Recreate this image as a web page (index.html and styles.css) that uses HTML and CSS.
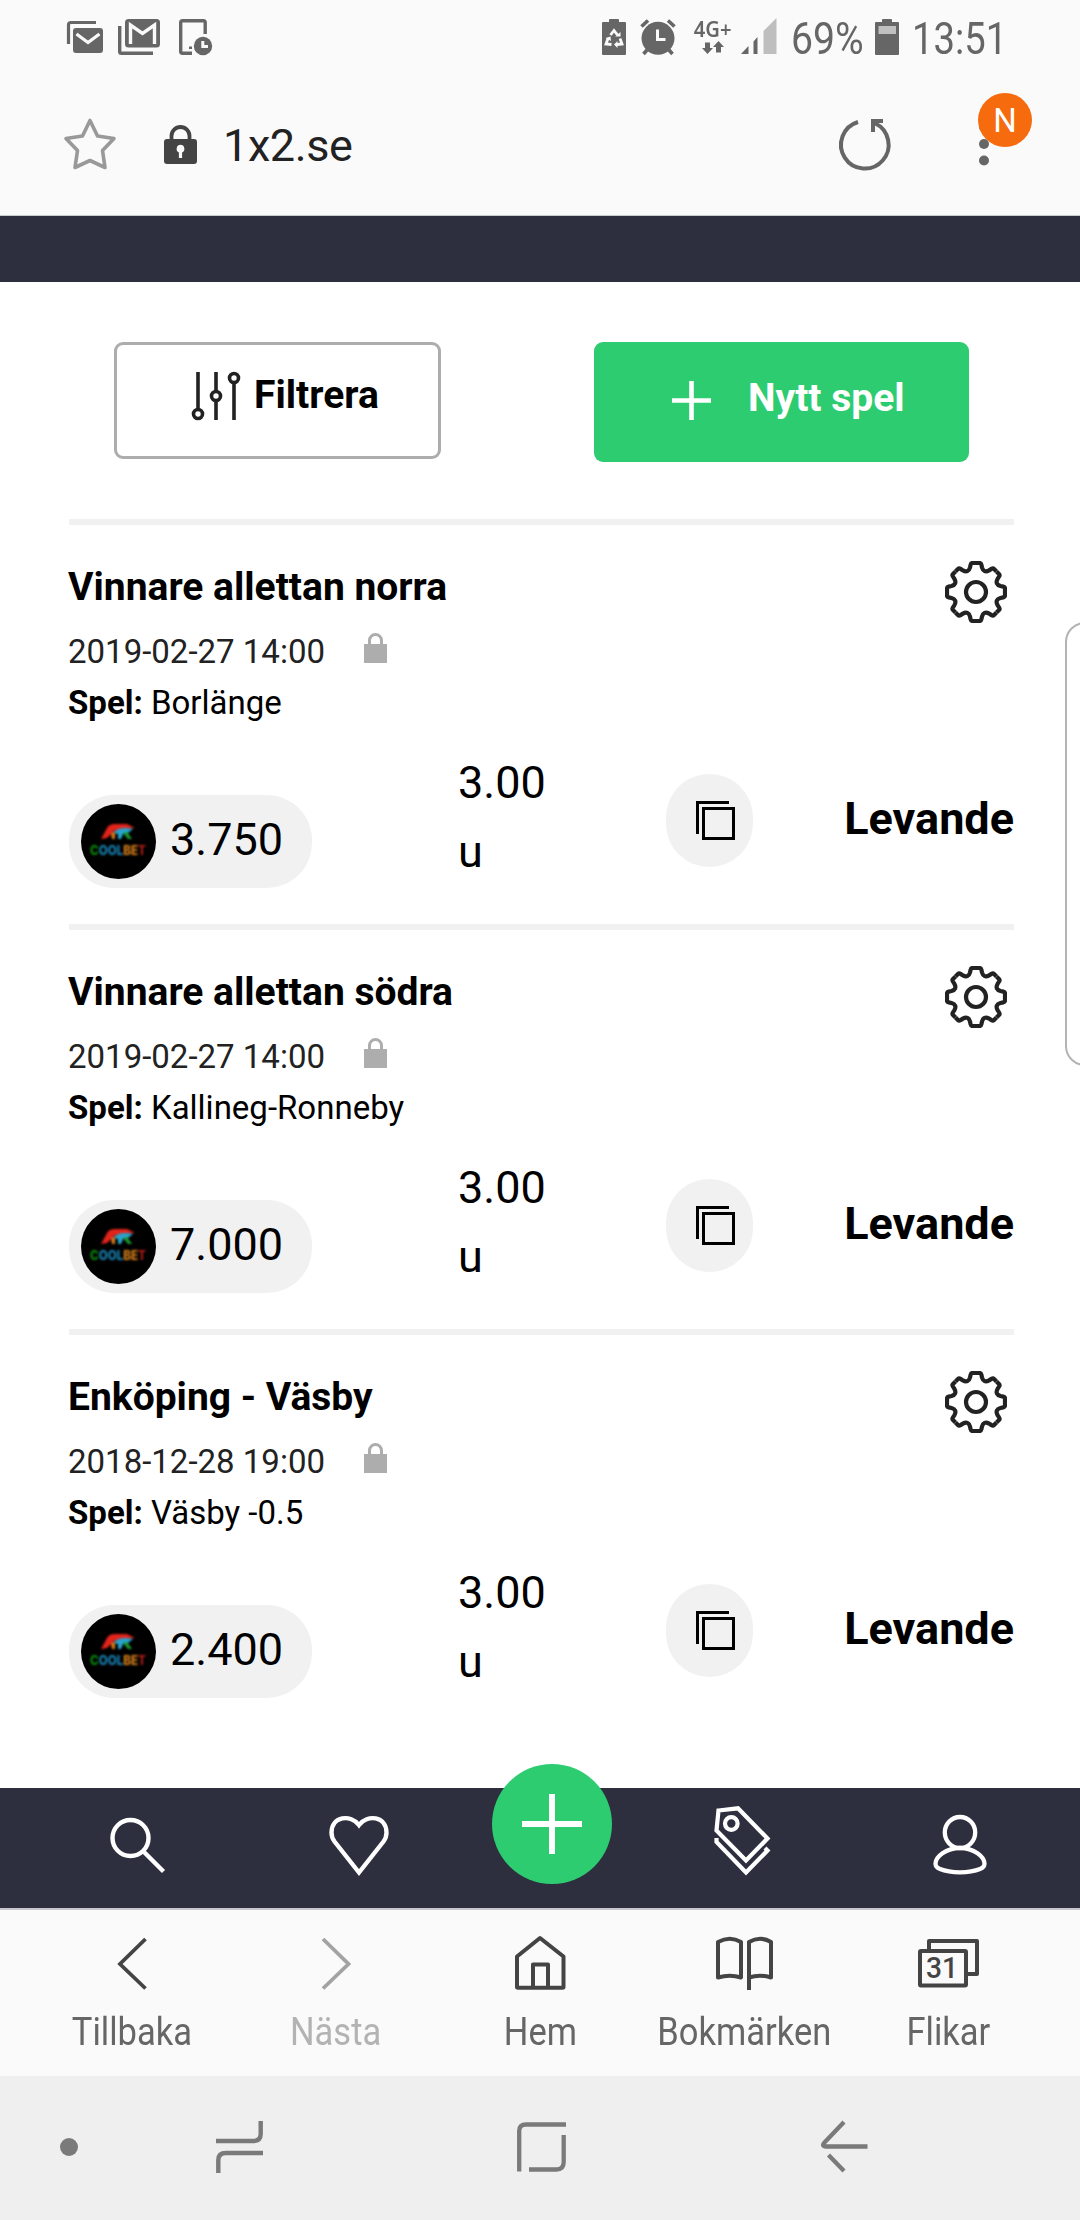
FILE: index.html
```html
<!DOCTYPE html>
<html lang="sv">
<head>
<meta charset="utf-8">
<title>1x2.se</title>
<link rel="stylesheet" href="styles.css">
</head>
<body>
<svg class="defs" width="0" height="0" aria-hidden="true">
  <defs>
    <path id="cog" d="M0-29H3.5Q5-29 5.4-27.3L6-24.5Q6.8-21.6 8.65-20.85Q10.5-20.1 13.1-21.6L15.5-23.1Q17-24.05 18.05-23L20.5-20.5"/>
    <symbol id="gear" viewBox="-31 -31 62 62">
      <g fill="none" stroke="#222" stroke-width="4.2">
        <use href="#cog"/><use href="#cog" transform="rotate(45)"/><use href="#cog" transform="rotate(90)"/><use href="#cog" transform="rotate(135)"/>
        <use href="#cog" transform="rotate(180)"/><use href="#cog" transform="rotate(225)"/><use href="#cog" transform="rotate(270)"/><use href="#cog" transform="rotate(315)"/>
        <circle r="10"/>
      </g>
    </symbol>
    <symbol id="padlock" viewBox="0 0 23 30">
      <path d="M0 11H4V7.5a7.5 7.5 0 0 1 15 0V11H23V30H0zM7 11H16V7.5a4.5 4.5 0 0 0-9 0z" fill="#adadad"/>
    </symbol>
    <symbol id="copy" viewBox="0 0 39 39">
      <path d="M33 1.5H1.5V33M7.500 7.500H37.500V37.500H7.500Z" fill="none" stroke="#000" stroke-width="3"/>
    </symbol>
    <symbol id="coolbet" viewBox="0 0 75 75">
      <circle cx="37.500" cy="37.500" r="37.500" fill="#000"/>
      <g class="logo-art">
        <path d="M20 35L26 24Q28 20 34 20L46 20 54 24 40 25 33 27 26 34Z" fill="#e3241b"/>
        <path d="M32 29Q38 22 52 25L47 29 42 30 40 35H37V30Z" fill="#27a3cf"/>
        <path d="M30 29L34 28V35H31Z" fill="#d97b1a"/>
        <path d="M42 29L46 28 51 35H47Z" fill="#1c9b2c"/>
        <text x="9" y="51" textLength="56" lengthAdjust="spacingAndGlyphs" class="logo-word"><tspan fill="#0c900c">C</tspan><tspan fill="#1a86b8">OOL</tspan><tspan fill="#d8801a">BE</tspan><tspan fill="#b01c18">T</tspan></text>
      </g>
    </symbol>
  </defs>
</svg>

<div class="screen">
  <header class="status">
    <svg class="st-mail" width="36" height="32" viewBox="0 0 36 32"><path d="M1.500 23V4Q1.500 1.500 4 1.500H29" fill="none" stroke="#666" stroke-width="3.200"/><rect x="6" y="7" width="30" height="25" rx="3" fill="#666"/><path d="M9.500 13L21 21.500 32.500 13" fill="none" stroke="#fafafa" stroke-width="3.200"/></svg>
    <svg class="st-gmail" width="42" height="36" viewBox="0 0 42 36"><path d="M1.700 7V32.500Q1.700 34.300 3.500 34.300H35" fill="none" stroke="#666" stroke-width="3.400"/><rect x="7" y="0" width="35" height="28.500" rx="3.500" fill="#666"/><path d="M12.500 25V6L24.500 14.500 36.500 6V25" fill="none" stroke="#fafafa" stroke-width="3.400"/></svg>
    <svg class="st-phone" width="34" height="36" viewBox="0 0 34 36"><path d="M26.200 15V3.500Q26.200 1.700 24.500 1.700H3.500Q1.700 1.700 1.700 3.500V32.500Q1.700 34.200 3.500 34.200H13" fill="none" stroke="#666" stroke-width="3.400"/><rect x="10" y="27.500" width="3" height="2.500" fill="#666"/><circle cx="24" cy="27" r="9.200" fill="#666"/><path d="M23.800 22V27.500H29" fill="none" stroke="#fafafa" stroke-width="3"/></svg>
    <div class="spacer"></div>
    <svg class="st-saver" width="24" height="36" viewBox="0 0 24 36"><path d="M1 3H7V1Q7 0 8 0H16Q17 0 17 1V3H23Q24 3 24 4V35Q24 36 23 36H1Q0 36 0 35V4Q0 3 1 3Z" fill="#666"/><path d="M8.500 16L12 11.500 15.500 16M18 19.500L20 25 14.500 25.500M9.500 25.500L4 25 6 19.500" fill="none" stroke="#fafafa" stroke-width="2.800"/><path d="M13.200 17.500H18.500V13zM15.500 22V29L12 25.500zM3.500 19L8.500 17.500 9 22z" fill="#fafafa"/></svg>
    <svg class="st-alarm" width="36" height="36" viewBox="0 0 36 36"><circle cx="18" cy="19.300" r="16.500" fill="#666"/><path d="M1.500 7.500L8 1.500M34.500 7.500L28 1.500M7 31L3.500 35M29 31L32.500 35" stroke="#666" stroke-width="3.600"/><path d="M17.500 10.500V20.500H25.500" fill="none" stroke="#fafafa" stroke-width="3"/></svg>
    <div class="net"><span>4G+</span><svg width="22" height="13" viewBox="0 0 22 13"><path d="M3 1.500H8V7H11L5.500 13 0 7H3zM14 11.500H19V6H22L16.500 0 11 6H14z" fill="#666"/></svg></div>
    <svg class="st-signal" width="36" height="36" viewBox="0 0 36 36"><path d="M0 36L7.500 28V36zM12.500 23.500L16.500 19V36H12.500z" fill="#666"/><path d="M22.500 13L35.500 0V36H22.500z" fill="#bebebe"/></svg>
    <span class="st-text st-pct">69%</span>
    <svg class="st-batt" width="24" height="36" viewBox="0 0 24 36"><path d="M1 3H7V1Q7 0 8 0H16Q17 0 17 1V3H23Q24 3 24 4V35Q24 36 23 36H1Q0 36 0 35V4Q0 3 1 3Z" fill="#666"/><rect x="3.500" y="7" width="17.500" height="8" fill="#c0c0c0"/></svg>
    <span class="st-text st-clock">13:51</span>
  </header>

  <div class="urlbar">
    <svg class="u-star" width="52" height="52" viewBox="0 0 52 52"><path d="M26 2.500L33.500 18 50 20.500 38.500 32.500 41 49.500 26 42.500 11 49.500 13.500 32.500 2 20.500 18.500 18Z" fill="none" stroke="#999" stroke-width="3.600" stroke-linejoin="round"/></svg>
    <svg class="u-lock" width="33" height="39" viewBox="0 0 33 39"><path d="M7.500 16V11a9 9 0 0 1 18 0V16" fill="none" stroke="#444" stroke-width="3.800"/><rect y="14" width="33" height="25" rx="3" fill="#444"/><path d="M16.500 19.800a4 4 0 0 1 1.600 7.600V33H14.900V27.400a4 4 0 0 1 1.600-7.600z" fill="#fafafa"/></svg>
    <span class="u-host">1x2.se</span>
    <div class="spacer"></div>
    <svg class="u-reload" width="52" height="52" viewBox="0 0 52 52"><path d="M20 3A23.800 23.800 0 1 0 37 4.300" fill="none" stroke="#666" stroke-width="4"/><path d="M33 13V0H45V4H39L37 7V13z" fill="#666"/></svg>
    <div class="u-menu">
      <svg width="10" height="44" viewBox="0 0 10 44"><circle cx="5" cy="5" r="5" fill="#666"/><circle cx="5" cy="22" r="5" fill="#666"/><circle cx="5" cy="38.500" r="5" fill="#666"/></svg>
      <span class="u-badge">N</span>
    </div>
  </div>

  <main class="page">
    <div class="band"></div>
    <div class="actions">
      <button class="btn filter"><svg width="48" height="48" viewBox="0 0 48 48"><g fill="none" stroke="#222" stroke-width="3.600"><path d="M6 0V37M24 0V19M24 29V48M42 11V48"/><circle cx="6" cy="42" r="4.500"/><circle cx="24" cy="24" r="4.500"/><circle cx="42" cy="6" r="4.500"/></g></svg><span>Filtrera</span></button>
      <button class="btn new"><svg width="39" height="39" viewBox="0 0 39 39"><path d="M19.500 0V39M0 19.500H39" stroke="#fff" stroke-width="4.600"/></svg><span>Nytt spel</span></button>
    </div>

    <section class="bets">
      <article class="bet">
        <div class="bet-head">
          <div class="bet-info">
            <h2>Vinnare allettan norra</h2>
            <p class="when">2019-02-27 14:00<svg width="23" height="30"><use href="#padlock"/></svg></p>
            <p><b>Spel:</b> Borlänge</p>
          </div>
          <svg class="gear" width="62" height="62"><use href="#gear"/></svg>
        </div>
        <div class="bet-row">
          <div class="odds"><svg width="75" height="75"><use href="#coolbet"/></svg><span>3.750</span></div>
          <div class="stake">3.00<br>u</div>
          <div class="copy"><svg width="39" height="39"><use href="#copy"/></svg></div>
          <div class="live">Levande</div>
        </div>
      </article>
      <article class="bet">
        <div class="bet-head">
          <div class="bet-info">
            <h2>Vinnare allettan södra</h2>
            <p class="when">2019-02-27 14:00<svg width="23" height="30"><use href="#padlock"/></svg></p>
            <p><b>Spel:</b> Kallineg-Ronneby</p>
          </div>
          <svg class="gear" width="62" height="62"><use href="#gear"/></svg>
        </div>
        <div class="bet-row">
          <div class="odds"><svg width="75" height="75"><use href="#coolbet"/></svg><span>7.000</span></div>
          <div class="stake">3.00<br>u</div>
          <div class="copy"><svg width="39" height="39"><use href="#copy"/></svg></div>
          <div class="live">Levande</div>
        </div>
      </article>
      <article class="bet">
        <div class="bet-head">
          <div class="bet-info">
            <h2>Enköping - Väsby</h2>
            <p class="when">2018-12-28 19:00<svg width="23" height="30"><use href="#padlock"/></svg></p>
            <p><b>Spel:</b> Väsby -0.5</p>
          </div>
          <svg class="gear" width="62" height="62"><use href="#gear"/></svg>
        </div>
        <div class="bet-row">
          <div class="odds"><svg width="75" height="75"><use href="#coolbet"/></svg><span>2.400</span></div>
          <div class="stake">3.00<br>u</div>
          <div class="copy"><svg width="39" height="39"><use href="#copy"/></svg></div>
          <div class="live">Levande</div>
        </div>
      </article>
    </section>
  </main>

  <nav class="appnav">
    <svg class="n-search" width="56" height="56" viewBox="0 0 56 56"><g fill="none" stroke="#fff" stroke-width="4.400"><circle cx="20.500" cy="20" r="18"/><path d="M33.500 33.500L53.500 53.500"/></g></svg>
    <svg class="n-heart" width="60" height="61" viewBox="0 0 60 61"><path d="M30 10C22-1 2.500 1 2.500 17.500 2.500 21.500 4 24.500 5.500 26.500L30 57.500 54.500 26.500C56 24.500 57.500 21.500 57.500 17.500 57.500 1 38-1 30 10Z" fill="none" stroke="#fff" stroke-width="4.400"/></svg>
    <button class="fab"><svg width="60" height="60" viewBox="0 0 60 60"><path d="M30 0V60M0 30H60" stroke="#fff" stroke-width="6"/></svg></button>
    <svg class="n-tags" width="58" height="70" viewBox="0 0 58 70"><g fill="none" stroke="#fff" stroke-width="4.200"><path d="M4.500 4.500L24 2.300 53.500 32.500 32 54.500 2.500 24.500Z"/><circle cx="17.300" cy="17.500" r="6.300"/><path d="M2.500 32V36L32 66.500 53.500 44.500 51 42"/></g></svg>
    <svg class="n-user" width="54" height="60" viewBox="0 0 54 60"><g fill="none" stroke="#fff" stroke-width="4.300"><ellipse cx="27" cy="17.500" rx="15.200" ry="15.500"/><path d="M27 33C41 33 51.500 42 51.500 48.500 51.500 51 50 53 47 54 41 56.500 34 57.300 27 57.300S13 56.500 7 54C4 53 2.500 51 2.500 48.500 2.500 42 13 33 27 33Z"/></g></svg>
  </nav>

  <nav class="toolbar">
    <div class="tool"><svg width="60" height="54" viewBox="0 0 60 54"><path d="M43.500 3L18 28 43.500 52.500" fill="none" stroke="#444" stroke-width="3.800"/></svg><span>Tillbaka</span></div>
    <div class="tool off"><svg width="60" height="54" viewBox="0 0 60 54"><path d="M17 3L42.500 28 17 52.500" fill="none" stroke="#a3a3a3" stroke-width="3.800"/></svg><span>Nästa</span></div>
    <div class="tool"><svg width="60" height="54" viewBox="0 0 60 54"><path d="M7 20.500L30 2 53.500 20.500V51Q53.500 51.800 52.500 51.800H8Q7 51.800 7 51ZM23 51V28.500H38V51" fill="none" stroke="#444" stroke-width="4" stroke-linejoin="round"/></svg><span>Hem</span></div>
    <div class="tool"><svg width="60" height="54" viewBox="0 0 60 54"><path d="M27 6Q16-.5 4 6V41.500Q16 38 27 41.500ZM35 54V6Q46-.5 57 6V41.500Q46 38 35 41.500" fill="none" stroke="#444" stroke-width="4" stroke-linejoin="round"/></svg><span>Bokmärken</span></div>
    <div class="tool"><svg width="62" height="54" viewBox="0 0 62 54"><path d="M12 15V5H60V38H50" fill="none" stroke="#444" stroke-width="4" stroke-linejoin="round"/><rect x="3" y="15" width="46" height="34.500" rx="1" fill="none" stroke="#444" stroke-width="4"/><text x="9" y="42" textLength="32" lengthAdjust="spacingAndGlyphs" class="tab-count">31</text></svg><span>Flikar</span></div>
  </nav>

  <footer class="sysnav">
    <svg class="s-dot" width="18" height="18" viewBox="0 0 18 18"><circle cx="9" cy="9" r="9" fill="#7a7a7a"/></svg>
    <svg class="s-recent" width="47" height="54" viewBox="0 0 47 54"><path d="M0 21H37Q44.700 21 44.700 14V1M47 33H10Q2.300 33 2.300 40V53" fill="none" stroke="#7a7a7a" stroke-width="4.400"/></svg>
    <svg class="s-home" width="49" height="50" viewBox="0 0 49 50"><path d="M2.200 49.500V9Q2.200 2.500 9 2.500H49M46.700 13V40Q46.700 47.500 39.500 47.500H12" fill="none" stroke="#7a7a7a" stroke-width="4.300"/></svg>
    <svg class="s-back" width="47" height="54" viewBox="0 0 47 54"><path d="M23 2L3.500 22.500C1 25 2 26.500 5 26.500H46.500M7.500 35L23 51" fill="none" stroke="#7a7a7a" stroke-width="4.300"/></svg>
  </footer>

  <div class="edge"></div>
</div>
</body>
</html>
```

FILE: styles.css
```css
* { box-sizing: border-box; }
body { margin: 0; background: #fff; font-family: Roboto, "Liberation Sans", sans-serif; color: #000; }
svg { display: block; flex: none; overflow: visible; }
h2, p { margin: 0; }
button { font: inherit; border: 0; padding: 0; }
.defs { position: absolute; }
.spacer { flex: 1; }

.screen { position: relative; width: 1080px; height: 2220px; overflow: hidden; display: flex; flex-direction: column; }

/* Phone status bar */
.status { height: 76px; flex: none; background: #fafafa; display: flex; align-items: flex-start; padding: 19px 0 0 67px; color: #666; }
.st-mail { margin: 2px 15px 0 0; }
.st-gmail { margin-right: 19px; }
.st-saver { margin-right: 14px; }
.st-alarm { margin-right: 18px; }
.net { width: 37px; margin-right: 10px; display: flex; flex-direction: column; align-items: center; font: 600 21px/20px "Noto Sans", sans-serif; white-space: nowrap; }
.net span { transform: scaleX(.96); }
.net svg { margin-top: 2px; }
.st-signal { margin: -1px 14px 0 0; }
.st-text { font-size: 45px; line-height: 46px; margin-top: -3px; white-space: nowrap; transform: scaleX(.87); transform-origin: 0 50%; }
.st-pct { width: 84px; }
.st-clock { width: 168px; margin-left: 13px; transform: scaleX(.85); }

/* Address bar */
.urlbar { height: 140px; flex: none; background: #fafafa; border-bottom: 1px solid #c9d0cc; display: flex; align-items: flex-start; padding: 42px 0 0 64px; }
.u-lock { margin: 7px 26px 0 48px; }
.u-host { font-size: 45px; line-height: 54px; letter-spacing: -.4px; margin-top: 1px; color: #222; }
.u-reload { margin: 1px 89px 0 0; }
.u-menu { position: relative; width: 101px; height: 54px; padding-top: 4px; }
.u-badge { position: absolute; left: -1px; top: -25px; width: 54px; height: 54px; border-radius: 50%; background: #f66b0e; color: #fff; font-size: 33px; line-height: 55px; text-align: center; }

/* Page content */
.page { height: 1572px; flex: none; }
.band { height: 66px; background: #2d2e3e; }
.actions { display: flex; padding: 60px 111px 57px 114px; justify-content: space-between; height: 237px; align-items: flex-start; }
.btn { display: flex; align-items: flex-start; border-radius: 9px; font-weight: 700; font-size: 39px; line-height: 54px; color: #000; }
.filter { width: 327px; height: 117px; border: 3px solid #adadad; background: #fff; padding: 27px 0 0 75px; gap: 14px; }
.filter span { margin-top: -4px; }
.new { width: 375px; height: 120px; background: #2ecc71; color: #fff; padding: 39px 0 0 78px; gap: 37px; }
.new span { margin-top: -10px; }

.bets { padding: 0 66px 0 69px; }
.bet { height: 405px; border-top: 6px solid #f1f1f1; width: 945px; padding-top: 35px; }
.bet-head { display: flex; justify-content: space-between; height: 168px; padding-right: 7px; }
.bet-info { margin-left: -1px; }
.bet h2 { font-size: 39px; line-height: 54px; font-weight: 700; margin-bottom: 12px; }
.bet p { font-size: 33px; line-height: 51px; }
.bet .when { color: #222; display: flex; gap: 39px; }
.when svg { margin-top: 7px; }
.gear { margin-top: 1px; }
.bet-row { display: grid; grid-template-columns: 389px 208px 87px 1fr; align-items: start; margin-top: 19px; font-size: 45px; line-height: 69px; }
.odds { width: 243px; height: 93px; margin-top: 48px; border-radius: 45px; background: #f1f1f1; display: flex; align-items: flex-start; padding: 9px 0 0 12px; gap: 14px; }
.odds span { margin-top: 1px; }
.stake { margin-top: 1px; }
.logo-art { filter: blur(.9px); }
.logo-word { font: 800 13px Inter, sans-serif; }
.copy { width: 87px; height: 93px; margin-top: 27px; border-radius: 45px; background: #f1f1f1; padding: 27px 0 0 30px; }
.live { margin: -1px 0 0; padding-top: 38px; font-weight: 700; text-align: right; }

/* Site navigation */
.appnav { height: 122px; flex: none; position: relative; background: #2d2e3e; border-bottom: 2px solid #c8c6cc; display: flex; align-items: flex-start; padding-left: 110px; }
.n-search { margin: 30px 163px 0 0; }
.n-heart { margin: 27px 103px 0 0; }
.fab { width: 120px; height: 120px; border-radius: 50%; background: #2ecc71; padding: 30px; margin: -24px 102px 0 0; flex: none; }
.n-tags { margin: 18px 161px 0 0; }
.n-user { margin-top: 27px; }

/* Browser toolbar */
.toolbar { height: 166px; flex: none; background: #fafafa; display: grid; grid-template-columns: repeat(5, 204px); padding: 26px 30px 0; }
.tool { display: flex; flex-direction: column; align-items: center; gap: 15px; font-size: 39px; line-height: 54px; color: #666; white-space: nowrap; }
.tool span { transform: scaleX(.885); }
.tool.off { color: #b3b3b3; }
.tab-count { font: 500 29px Roboto, sans-serif; fill: #444; }

/* System buttons */
.sysnav { height: 144px; flex: none; background: #efefef; display: flex; align-items: flex-start; padding: 44px 0 0 60px; }
.s-dot { margin: 18px 138px 0 0; }
.s-recent { margin-right: 254px; }
.s-home { margin: 2px 255px 0 0; }

/* Edge panel handle */
.edge { position: absolute; left: 1065px; top: 622px; width: 40px; height: 444px; border: 2px solid #b3b3b3; border-radius: 21px; background: #fff; }
```
